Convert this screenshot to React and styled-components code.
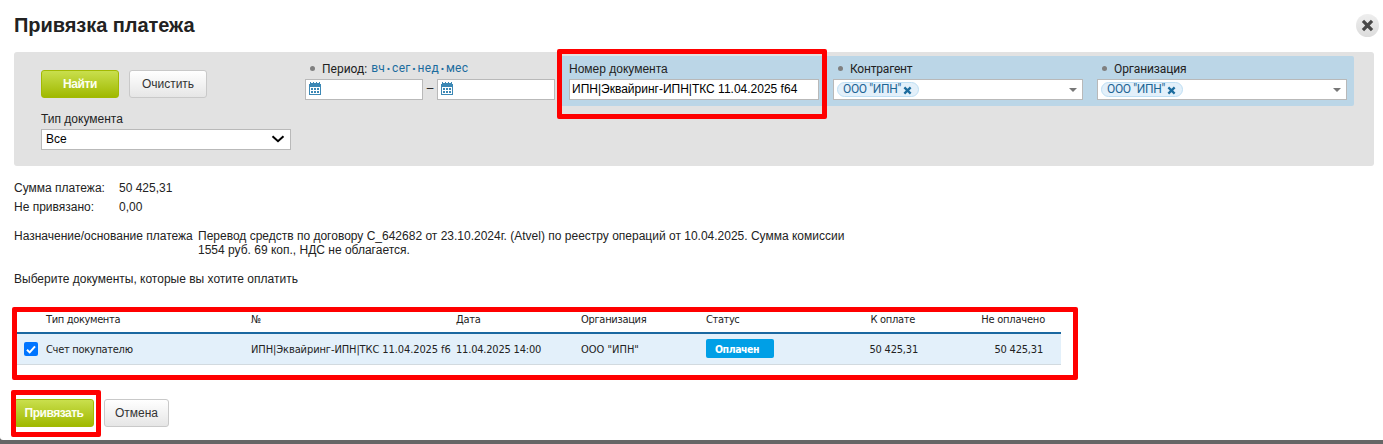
import React from 'react';
import styled, { createGlobalStyle } from 'styled-components';

const GlobalStyle = createGlobalStyle`
  * { box-sizing: border-box; }
  body {
    margin: 0;
    background: #666;
    color: #222;
    font: 12px/14px "Liberation Sans", Arial, sans-serif;
    overflow: hidden;
  }
`;

const Dialog = styled.main`
  position: relative;
  height: 440px;
  padding: 12px 4px 0 14px;
  background: #fff;
  border-radius: 0 0 0 3px;
`;

const Header = styled.header`
  display: flex;
  justify-content: space-between;
  align-items: center;
  height: 26px;
`;

const Title = styled.h1`
  margin: 0;
  font-size: 20px;
  line-height: 26px;
  font-weight: bold;
  letter-spacing: -0.05px;
`;

const CloseButton = styled.button`
  display: grid;
  place-items: center;
  width: 23px;
  height: 23px;
  padding: 0;
  border: 0;
  border-radius: 50%;
  background: linear-gradient(#eee, #dcdcdc);
`;

const Filters = styled.section`
  display: grid;
  grid-template-columns: repeat(5, 264px);
  grid-template-rows: 50px 50px;
  width: 1360px;
  height: 114px;
  margin-top: 14px;
  padding: 4px 20px;
  border-radius: 3px;
  background: #e2e2e2;
`;

const Cell = styled.div`
  position: relative;
  padding: 4px 7px 0;
  background: ${(p) => (p.$active ? '#bbd6e7' : 'transparent')};
  border-radius: ${(p) => (p.$last ? '0 2px 2px 0' : '0')};
`;

const ButtonCell = styled.div`
  display: flex;
  gap: 10px;
  padding: 14px 7px 0;
`;

const Button = styled.button`
  width: ${(p) => p.$width}px;
  height: 28px;
  padding: 0 0 1px;
  border: 1px solid ${(p) => (p.$primary ? '#a2b902' : '#c9c9c9')};
  border-radius: 3px;
  background: ${(p) => (p.$primary ? 'linear-gradient(#c9df4d, #a0b900)' : 'linear-gradient(#fff, #e6e6e6)')};
  color: ${(p) => (p.$primary ? '#fdfff0' : '#333')};
  font: ${(p) => (p.$primary ? 'bold' : 'normal')} 12px "Liberation Sans", Arial, sans-serif;
  letter-spacing: ${(p) => p.$spacing || '0'};
`;

const Label = styled.div`
  display: flex;
  align-items: center;
  height: 17px;
  margin-bottom: 2px;
  line-height: 14px;
  white-space: pre;
  font-family: ${(p) => (p.$roboto ? 'Roboto' : '"Liberation Sans"')}, Arial, sans-serif;
  letter-spacing: ${(p) => p.$spacing || '0'};
`;

const Dot = styled.i`
  width: 5px;
  height: 5px;
  margin: 0 7px 0 5px;
  border-radius: 50%;
  background: #808080;
`;

const QuickLinks = styled.span`
  display: flex;
  margin-left: 4px;
  color: #1c6c9e;
  letter-spacing: 0.27px;
`;

const Separator = styled.span`
  width: 7px;
  padding-top: 1px;
  text-align: center;
  font-weight: 900;
`;

const Field = styled.div`
  display: flex;
  align-items: center;
  width: ${(p) => p.$width || 250}px;
  height: 21px;
  padding: 0 ${(p) => p.$right || 3}px ${(p) => (p.$chips ? 0 : 2)}px ${(p) => p.$left || 3}px;
  border: 1px solid #b9b9b9;
  background: #fff;
  color: #000;
  white-space: nowrap;
`;

const Push = styled.svg`
  margin-left: auto;
`;

const PeriodFields = styled.div`
  display: flex;
  justify-content: space-between;
  line-height: 18px;
`;

const Chip = styled.span`
  display: flex;
  align-items: center;
  justify-content: space-between;
  width: 82px;
  height: 15px;
  padding: 0 6px 0 5px;
  border: 1px solid #bedff4;
  border-radius: 8px;
  background: #e3f0fa;
  color: #1c6595;
  font: 12px/13px Roboto, sans-serif;
  letter-spacing: -0.35px;
  svg { flex: none; margin-top: 1px; }
`;

const Frame = styled.div`
  position: absolute;
  z-index: 2;
  top: ${(p) => p.$top}px;
  left: ${(p) => p.$left}px;
  width: ${(p) => p.$width}px;
  height: ${(p) => p.$height}px;
  border: 5px solid #f00;
  border-radius: 2px;
  pointer-events: none;
`;

const Summary = styled.dl`
  display: grid;
  grid-template-columns: 105px 1fr;
  grid-auto-rows: 19px;
  margin: 12px 0 0;
  line-height: 20px;
  dd { margin: 0; }
`;

const Purpose = styled.div`
  display: grid;
  grid-template-columns: 184px 660px;
  margin-top: 13px;
  line-height: 14px;
`;

const Line = styled.div`
  white-space: nowrap;
`;

const Hint = styled.p`
  margin: 15px 0 0;
`;

const Documents = styled.section`
  position: relative;
  width: 1047px;
  margin-top: 24px;
  font: 11px/14px "DejaVu Sans Condensed", "DejaVu Sans", sans-serif;
`;

const Row = styled.div`
  display: grid;
  grid-template-columns: 32px 205px 205px 125px 125px 125px 88px 125px;
  align-items: center;
  height: ${(p) => (p.$head ? 24 : 31)}px;
  padding-bottom: ${(p) => (p.$head ? 3 : 0)}px;
  border-bottom: ${(p) => (p.$head ? '2px solid #1b68a0' : '1px solid #d2dadf')};
  background: ${(p) => (p.$head ? '#fff' : '#e3f0fa')};
`;

const Text = styled.span`
  padding-top: ${(p) => (p.$head ? 0 : 2)}px;
  white-space: nowrap;
  text-align: ${(p) => p.$align || 'left'};
  letter-spacing: ${(p) => p.$spacing || '0'};
  margin-right: ${(p) => p.$end || 0}px;
`;

const Checkbox = styled.span`
  display: grid;
  place-items: center;
  width: 14px;
  height: 14px;
  margin-left: 10px;
  border-radius: 2px;
  background: #0075ff;
`;

const Status = styled.span`
  width: 68px;
  height: 19px;
  margin-bottom: 1px;
  padding-left: 9px;
  border-radius: 2px;
  background: #009fe6;
  color: #fff;
  font-weight: bold;
  font-size: 10.5px;
  line-height: 20px;
  letter-spacing: -0.45px;
`;

const Actions = styled.footer`
  position: relative;
  display: flex;
  gap: 10px;
  margin-top: 34px;
`;

const Calendar = () => (
  <svg width="12" height="13" viewBox="0 0 12 13" shapeRendering="crispEdges">
    <path fill="#3c88b5" d="M0 1h12v12H0z" />
    <path fill="#fff" d="M1 5h10v7H1zM0 0h1v2H0zM2 0h2v1H2zM5 0h2v1H5zM8 0h2v1H8zM11 0h1v2h-1z" />
    <path fill="#3c88b5" d="M1 0h1v2H1zM4 0h1v2H4zM7 0h1v2H7zM10 0h1v2h-1zM2 6h2v2H2zM5 6h2v2H5zM8 6h2v2H8zM2 9h2v2H2zM5 9h2v2H5zM8 9h2v2H8z" />
  </svg>
);

const Cross = ({ size, color }) => (
  <svg width={size} height={size} viewBox="0 0 8 8">
    <path d="M1.2 1.2l5.6 5.6M6.8 1.2L1.2 6.8" stroke={color} strokeWidth="2" />
  </svg>
);

const Lookup = ({ label, spacing, last }) => (
  <Cell $active $last={last}>
    <Label $roboto $spacing={spacing}><Dot />{label}</Label>
    <Field $chips $left={3} $right={5}>
      <Chip>ООО "ИПН"<Cross size={9} color="#1c6c9e" /></Chip>
      <Push width="8" height="4" viewBox="0 0 8 4"><path d="M0 0h8L4 4z" fill="#777" /></Push>
    </Field>
  </Cell>
);

export default function App() {
  return (
    <>
      <GlobalStyle />
      <Dialog>
        <Header>
          <Title>Привязка платежа</Title>
          <CloseButton aria-label="Закрыть"><Cross size={13} color="#484848" /></CloseButton>
        </Header>

        <Filters>
          <ButtonCell>
            <Button $primary $width={78} $spacing="-0.35px">Найти</Button>
            <Button $width={78}>Очистить</Button>
          </ButtonCell>
          <Cell>
            <Label $roboto>
              <Dot />Период:
              <QuickLinks>
                вч<Separator>·</Separator>сег<Separator>·</Separator>нед<Separator>·</Separator>мес
              </QuickLinks>
            </Label>
            <PeriodFields>
              <Field $width={118}><Calendar /></Field>
              –
              <Field $width={118}><Calendar /></Field>
            </PeriodFields>
          </Cell>
          <Cell $active>
            <Label>Номер документа</Label>
            <Field $left={2}>ИПН|Эквайринг-ИПН|ТКС 11.04.2025 f64</Field>
            <Frame $top={-7} $left={-5} $width={270} $height={70} />
          </Cell>
          <Lookup label="Контрагент" spacing="-0.2px" />
          <Lookup label="Организация" spacing="-0.1px" last />
          <Cell>
            <Label>Тип документа</Label>
            <Field $left={4} $right={5}>
              Все
              <Push width="14" height="8" viewBox="0 0 14 8">
                <path d="M1.5 1.2L7 6.2l5.5-5" fill="none" stroke="#000" strokeWidth="2" />
              </Push>
            </Field>
          </Cell>
        </Filters>

        <Summary>
          <dt>Сумма платежа:</dt><dd>50 425,31</dd>
          <dt>Не привязано:</dt><dd>0,00</dd>
        </Summary>

        <Purpose>
          <Line>Назначение/основание платежа</Line>
          <div>
            <Line>Перевод средств по договору С_642682 от 23.10.2024г. (Atvel) по реестру операций от 10.04.2025. Сумма комиссии</Line>
            <Line>1554 руб. 69 коп., НДС не облагается.</Line>
          </div>
        </Purpose>

        <Hint>Выберите документы, которые вы хотите оплатить</Hint>

        <Documents>
          <Row $head>
            <span />
            <Text $head $spacing="-0.35px">Тип документа</Text>
            <Text $head>№</Text>
            <Text $head $spacing="-0.3px">Дата</Text>
            <Text $head $spacing="-0.3px">Организация</Text>
            <Text $head $spacing="-0.4px">Статус</Text>
            <Text $head $align="right" $end={4} $spacing="-0.3px">К оплате</Text>
            <Text $head $align="right" $end={-1} $spacing="-0.2px">Не оплачено</Text>
          </Row>
          <Row>
            <Checkbox>
              <svg width="10" height="9" viewBox="0 0 10 9"><path d="M1 4.7l2.7 2.7L9 1.3" fill="none" stroke="#fff" strokeWidth="2" /></svg>
            </Checkbox>
            <Text $spacing="-0.3px">Счет покупателю</Text>
            <Text $spacing="-0.1px">ИПН|Эквайринг-ИПН|ТКС 11.04.2025 f6</Text>
            <Text $spacing="-0.2px">11.04.2025 14:00</Text>
            <Text>ООО "ИПН"</Text>
            <Status>Оплачен</Status>
            <Text $align="right" $end={1} $spacing="-0.2px">50 425,31</Text>
            <Text $align="right" $end={1} $spacing="-0.2px">50 425,31</Text>
          </Row>
          <Frame $top={-3} $left={-2} $width={1066} $height={73} />
        </Documents>

        <Actions>
          <Button $primary $width={80} $spacing="-0.5px">Привязать</Button>
          <Button $width={65}>Отмена</Button>
          <Frame $top={-9} $left={-3} $width={90} $height={47} />
        </Actions>
      </Dialog>
    </>
  );
}
